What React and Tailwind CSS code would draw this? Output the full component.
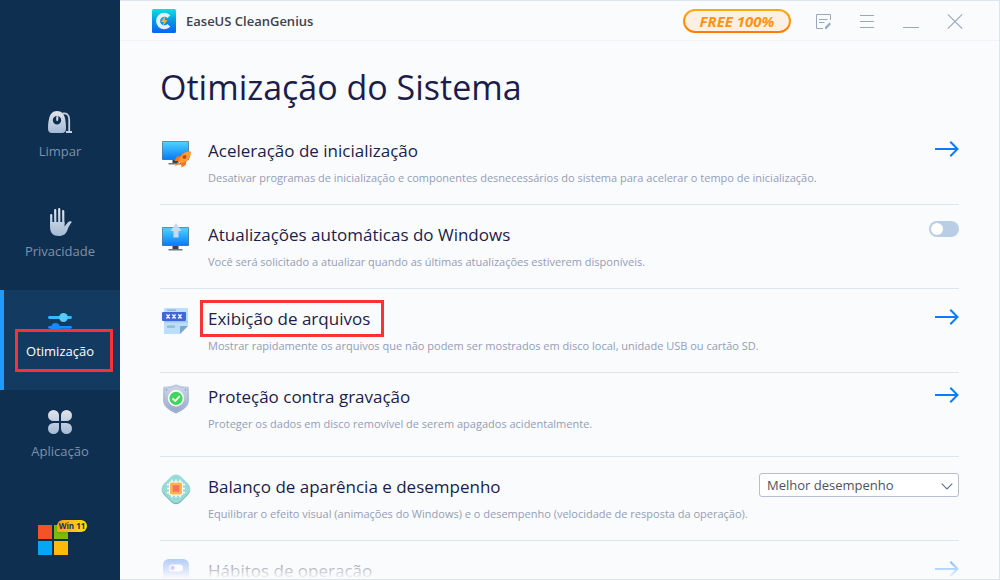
import React from "react";

function CleanIcon() {
  return (
    <svg width="24" height="24" viewBox="0 0 24 24" aria-hidden="true">
      <defs>
        <linearGradient id="navGrey" x1="0" y1="0" x2="0" y2="1">
          <stop offset="0" stopColor="#e2e5ea" />
          <stop offset="1" stopColor="#a3bad6" />
        </linearGradient>
      </defs>
      <path fillRule="evenodd" fill="url(#navGrey)" d="M9 1C13.500 1 16.500 4 17.200 9C17.700 12 18 15 18 18.500C18 21.500 16.500 23 14 23H4C1.500 23 0 21.500 0 18.500C0 15 .3 12 1 9C2 4 4.500 1 9 1ZM9 6A4.200 4.200 0 1 0 9 14.400A4.200 4.200 0 1 0 9 6Z" />
      <path d="M8.300 6.200L10.400 6.200L10.200 9.900A1 1 0 0 1 8.200 9.900Z" fill="#d3dbe6" />
      <path d="M14 3.600C18.500 2.400 21.200 5 21.200 9.500V22M18 22H24" fill="none" stroke="#c5d0df" strokeWidth="1.800" />
    </svg>
  );
}

function HandIcon() {
  return (
    <svg width="24" height="28" viewBox="0 0 24 28" aria-hidden="true">
      <defs>
        <linearGradient id="handGrey" gradientUnits="userSpaceOnUse" x1="0" y1="0" x2="0" y2="28">
          <stop offset="0" stopColor="#e2e5ea" />
          <stop offset="1" stopColor="#a3bad6" />
        </linearGradient>
      </defs>
      <g stroke="url(#handGrey)" strokeWidth="2.200" strokeLinecap="round">
        <path d="M3.200 7L3.300 18M7.200 2.200L7.300 16M11.200 1.200L11.300 16M15.200 3.200L15.300 16" />
      </g>
      <path fill="url(#handGrey)" d="M2.100 14H16.500V18.500L20 14.200C21 13.100 22.500 12.700 24 13.800C22.500 15.700 21 18 19.800 21C18.200 26 15.500 28 10.800 28C5 28 2.100 24.500 2.100 19.500Z" />
    </svg>
  );
}

function SlidersIcon() {
  return (
    <svg width="24" height="24" viewBox="0 0 24 24" aria-hidden="true">
      <path d="M1.500 7.500H22.500" stroke="#38b6ff" strokeWidth="2.800" strokeLinecap="round" />
      <ellipse cx="15.500" cy="7.500" rx="4.300" ry="4.500" fill="#5cc8ff" />
      <path d="M1.500 17.300H22.500" stroke="#168bff" strokeWidth="2.800" strokeLinecap="round" />
      <ellipse cx="7.500" cy="17.300" rx="4.400" ry="4.400" fill="#168bff" />
    </svg>
  );
}

function CloverIcon() {
  return (
    <svg width="24" height="24" viewBox="0 0 24 24" aria-hidden="true">
      <defs>
        <linearGradient id="cloverGrey" gradientUnits="userSpaceOnUse" x1="0" y1="0" x2="0" y2="24">
          <stop offset="0" stopColor="#e2e5ea" />
          <stop offset="1" stopColor="#a3bad6" />
        </linearGradient>
      </defs>
      <path fill="url(#cloverGrey)" d="M5.500 0A5.500 5.500 0 0 1 11 5.500V11H5.500A5.500 5.500 0 0 1 5.500 0ZM18.500 0A5.500 5.500 0 0 1 18.500 11H13V5.500A5.500 5.500 0 0 1 18.500 0ZM5.500 13H11V18.500A5.500 5.500 0 1 1 5.500 13ZM13 13H18.500A5.500 5.500 0 1 1 13 18.500Z" />
    </svg>
  );
}

function AppLogo() {
  return (
    <svg width="24" height="24" viewBox="0 0 24 24" aria-hidden="true">
      <defs>
        <linearGradient id="logoBg" x1="0" y1="0" x2="0" y2="1">
          <stop offset="0" stopColor="#04e3e0" />
          <stop offset=".5" stopColor="#0795e8" />
          <stop offset="1" stopColor="#0763f0" />
        </linearGradient>
      </defs>
      <rect width="24" height="24" rx="1.500" fill="url(#logoBg)" />
      <path d="M16.900 7.600A6.300 6.300 0 1 0 16.900 16.400" fill="none" stroke="#e3f1fc" strokeWidth="4" />
      <path d="M13.200 7L8.800 12.900H11.600L10.800 17.300L15.400 11.300H12.500Z" fill="#ffb52e" />
    </svg>
  );
}

function MonitorBase({ id }) {
  return (
    <>
      <defs>
        <linearGradient id={id} x1="0" y1="0" x2="0" y2="1">
          <stop offset="0" stopColor="#4fd3ff" />
          <stop offset="1" stopColor="#087cf7" />
        </linearGradient>
      </defs>
      <rect x="2" y="5" width="27" height="19" rx="1" fill="#64727e" />
      <rect x="2.700" y="5.700" width="25.600" height="17.600" fill={`url(#${id})`} />
      <path d="M12.500 24H18.500V27H12.500Z" fill="#38434e" />
      <path d="M8.500 27H22.500V28.500H8.500Z" fill="#6d7780" />
    </>
  );
}

function RocketMonitorIcon() {
  return (
    <svg width="32" height="32" viewBox="0 0 32 32" aria-hidden="true">
      <g transform="translate(0 -1)">
        <MonitorBase id="screenA" />
      </g>
      <path d="M30.500 14.500C26 14.400 22.500 16 20.500 19L16.800 19.500L14.500 24L18.500 24.100L21.200 27L21.500 30.500L25.800 28L26.300 24.500C30 21.700 31 18.500 30.500 14.500Z" fill="#f97321" />
      <path d="M30.500 14.500C25.500 14.400 21.500 16.500 18.500 23.600L21.200 26.600C27.300 24.200 31 20 30.500 14.500Z" fill="#ff9e35" />
      <circle cx="24.500" cy="20" r="2" fill="#c24c12" />
      <path d="M18 25L14.500 29.500L19.800 26.800Z" fill="#ff8a2a" />
    </svg>
  );
}

function UpdateMonitorIcon() {
  return (
    <svg width="32" height="32" viewBox="0 0 32 32" aria-hidden="true">
      <g transform="translate(0 1)">
        <MonitorBase id="screenB" />
      </g>
      <path d="M16 2L21.500 10H18.500V16.500H13.500V10H10.500Z" fill="#c7d9f4" />
    </svg>
  );
}

function FileIcon() {
  return (
    <svg width="32" height="32" viewBox="0 0 32 32" aria-hidden="true">
      <path d="M5 3H27Q28 3 28 4V21L20 29H5Q4 29 4 28V4Q4 3 5 3Z" fill="#bbdffb" />
      <path d="M28 21L20 29V22Q20 21 21 21Z" fill="#78a9cc" />
      <rect x="7" y="4.500" width="9" height="1.500" fill="#8db6d6" />
      <rect x="7" y="20.500" width="8" height="2.200" rx=".5" fill="#8fb8d9" />
      <path d="M4 16H28V17.500H4Z" fill="#9bc6ea" />
      <rect x="2" y="7" width="24" height="9" rx="1" fill="#4068d9" />
      <path d="M6.500 9.300L9.700 13.500M9.700 9.300L6.500 13.500M12.400 9.300L15.600 13.500M15.600 9.300L12.400 13.500M18.300 9.300L21.500 13.500M21.500 9.300L18.300 13.500" stroke="#fff" strokeWidth="1.300" />
    </svg>
  );
}

function ShieldIcon() {
  return (
    <svg width="32" height="32" viewBox="0 0 32 32" aria-hidden="true">
      <defs>
        <linearGradient id="shield" x1="0" y1="0" x2="0" y2="1">
          <stop offset="0" stopColor="#d4dbe9" />
          <stop offset="1" stopColor="#93a7c9" />
        </linearGradient>
      </defs>
      <path d="M16 1C20 3 24 3.700 29 3.700V17C29 23.500 23 27.500 16 30.500C9 27.500 3 23.500 3 17V3.700C8 3.700 12 3 16 1Z" fill="url(#shield)" />
      <path d="M16 2.700C20 4.300 24 5 27.700 5V17C27.700 22.700 22 26.500 16 29C10 26.500 4.300 22.700 4.300 17V5C8 5 12 4.300 16 2.700Z" fill="none" stroke="#a9b9d5" strokeWidth=".7" />
      <circle cx="6.500" cy="7" r=".8" fill="#8093b5" />
      <circle cx="25.500" cy="7" r=".8" fill="#8093b5" />
      <circle cx="16" cy="15.300" r="8.200" fill="#fff" />
      <circle cx="16" cy="15.300" r="6.600" fill="#3fd65c" />
      <path d="M12.500 15.400L15.200 18L19.800 13.200" fill="none" stroke="#fff" strokeWidth="1.800" />
    </svg>
  );
}

function ChipIcon() {
  return (
    <svg width="32" height="32" viewBox="0 0 32 32" aria-hidden="true">
      <rect x="4" y="5" width="24" height="24" rx="6.500" transform="rotate(45 16 17)" fill="#6fb9b9" />
      <rect x="4" y="3.700" width="24" height="24" rx="6.500" transform="rotate(45 16 15.700)" fill="#98dad6" />
      <rect x="9" y="8.500" width="14" height="14" rx="2" fill="#fff" />
      <path d="M12 6.500V24.500M16 6.500V24.500M20 6.500V24.500M7 11.500H25M7 15.500H25M7 19.500H25" stroke="#fff" strokeWidth="1.300" />
      <rect x="10" y="9.500" width="12" height="12" rx="1.500" fill="#ffb44f" />
      <rect x="12.700" y="12.200" width="6.600" height="6.600" fill="#ff735c" />
    </svg>
  );
}

function HabitIcon() {
  return (
    <svg width="32" height="32" viewBox="0 0 32 32" aria-hidden="true">
      <rect x="3" y="2" width="26" height="28" rx="6" fill="#7fa8f3" />
      <rect x="9" y="7.500" width="14" height="7" rx="3.500" fill="#fff" />
      <circle cx="12.500" cy="11" r="2.200" fill="#8a6df2" />
      <rect x="9" y="18" width="14" height="7" rx="3.500" fill="#c9b5ff" />
    </svg>
  );
}

function ArrowLink({ label }) {
  return (
    <button type="button" aria-label={label} className="mt-5 block cursor-pointer">
      <svg width="24" height="16" viewBox="0 0 24 16" aria-hidden="true">
        <path d="M0 8H22.500M15.300 .8L22.500 8L15.300 15.200" fill="none" stroke="#0a7cff" strokeWidth="2" />
      </svg>
    </button>
  );
}

function UpdateSwitch() {
  return (
    <input
      type="checkbox"
      role="switch"
      aria-label="Atualizações automáticas do Windows"
      className="mt-4 block h-4 w-[30px] cursor-pointer appearance-none rounded-full bg-[#b9cde4] before:m-0.5 before:block before:size-3 before:rounded-full before:bg-white checked:bg-[#0a7cff] checked:before:ml-4"
    />
  );
}

function PerformanceSelect() {
  return (
    <div className="relative mt-4 w-[200px]">
      <select
        aria-label="Balanço de aparência e desempenho"
        className="block h-6 w-full appearance-none rounded-[3px] border border-[#b5bfd3] bg-white pr-6 pl-[7px] text-[13px] leading-5 text-[#4d5260]"
      >
        <option>Melhor desempenho</option>
        <option>Melhor aparência</option>
      </select>
      <svg className="pointer-events-none absolute top-[10px] right-[6px]" width="12" height="7" viewBox="0 0 12 7" aria-hidden="true">
        <path d="M.7 .7L6 6L11.300 .7" fill="none" stroke="#5d7391" strokeWidth="1.100" />
      </svg>
    </div>
  );
}

const navItems = [
  { label: "Limpar", icon: CleanIcon },
  { label: "Privacidade", icon: HandIcon },
  { label: "Otimização", icon: SlidersIcon, active: true },
  { label: "Aplicação", icon: CloverIcon },
];

const rows = [
  {
    title: "Aceleração de inicialização",
    text: "Desativar programas de inicialização e componentes desnecessários do sistema para acelerar o tempo de inicialização.",
    icon: RocketMonitorIcon,
  },
  {
    title: "Atualizações automáticas do Windows",
    text: "Você será solicitado a atualizar quando as últimas atualizações estiverem disponíveis.",
    icon: UpdateMonitorIcon,
    control: UpdateSwitch,
  },
  {
    title: "Exibição de arquivos",
    text: "Mostrar rapidamente os arquivos que não podem ser mostrados em disco local, unidade USB ou cartão SD.",
    icon: FileIcon,
    marked: true,
  },
  {
    title: "Proteção contra gravação",
    text: "Proteger os dados em disco removível de serem apagados acidentalmente.",
    icon: ShieldIcon,
    raised: true,
  },
  {
    title: "Balanço de aparência e desempenho",
    text: "Equilibrar o efeito visual (animações do Windows) e o desempenho (velocidade de resposta da operação).",
    icon: ChipIcon,
    control: PerformanceSelect,
  },
  { title: "Hábitos de operação", icon: HabitIcon },
];

function Sidebar() {
  return (
    <aside className="flex w-[120px] shrink-0 flex-col bg-[#0e2f50] pt-[90px]">
      <nav>
        {navItems.map(({ label, icon: Icon, active }) => (
          <a
            key={label}
            href="#"
            aria-current={active ? "page" : undefined}
            className={`relative flex h-[100px] flex-col items-center pt-5 text-[13px] ${
              active ? "bg-[#133b62] text-white" : "text-[#7d92aa]"
            }`}
          >
            {active && <span className="absolute inset-y-0 left-0 w-1 bg-[#1f9bff]" />}
            <span className="flex h-6 items-center">
              <Icon />
            </span>
            <span className="mt-[7px] leading-5">{label}</span>
            {active && <span className="absolute top-[39px] right-[7px] bottom-[18px] left-[15px] border-3 border-[#fb3235]" />}
          </a>
        ))}
      </nav>
      <div className="relative mt-auto ml-[38px] grid w-[30px] grid-cols-2 gap-0.5 pb-[25px]">
        <span className="h-3.5 bg-[#f65225]" />
        <span className="h-3.5 bg-[#7fba0a]" />
        <span className="h-3.5 bg-[#05a6f3]" />
        <span className="h-3.5 bg-[#ffba0d]" />
        <span className="absolute -top-[5px] left-[19px] flex h-3 w-[30px] items-center justify-center rounded-full rounded-bl-none bg-linear-to-r from-[#ffa11c] to-[#ffe000] text-[8px] leading-3 font-bold whitespace-nowrap text-[#153250] shadow">
          Win 11
        </span>
      </div>
    </aside>
  );
}

function TitleBar() {
  return (
    <header className="flex h-10 shrink-0 items-center border-b border-[#eff2f7] pr-9 pl-8">
      <AppLogo />
      <span className="ml-2.5 text-[13px] leading-6 font-semibold text-[#3d424c]">EaseUS CleanGenius</span>
      <button
        type="button"
        className="ml-auto h-6 w-[108px] cursor-pointer rounded-full bg-linear-to-b from-[#ffaa12] to-[#ff7c05] p-0.5"
      >
        <span className="block rounded-full bg-[#fdf0e2] text-[15px] leading-5 font-bold text-[#ff930f] italic">FREE 100%</span>
      </button>
      <div className="ml-6 flex items-center gap-7 text-[#99a9bd]">
        <button type="button" aria-label="Comentários" className="cursor-pointer">
          <svg className="block" width="17" height="16" viewBox="0 0 17 16" fill="none" stroke="currentColor" aria-hidden="true">
            <path d="M8 15.500H1.500V1.500H15.500V7M4 6.500H12.500M4 9.500H9.500" />
            <path d="M10 16V14L14.500 9.500L16 11L11.500 16Z" fill="currentColor" stroke="none" />
          </svg>
        </button>
        <button type="button" aria-label="Menu" className="cursor-pointer">
          <svg className="block" width="15" height="16" viewBox="0 0 15 16" stroke="currentColor" aria-hidden="true">
            <path d="M0 2.500H14M0 8.500H14M0 14.500H14" />
          </svg>
        </button>
        <button type="button" aria-label="Minimizar" className="cursor-pointer">
          <svg className="block" width="16" height="16" viewBox="0 0 16 16" stroke="currentColor" aria-hidden="true">
            <path d="M0 14.500H16" />
          </svg>
        </button>
        <button type="button" aria-label="Fechar" className="cursor-pointer">
          <svg className="block" width="16" height="16" viewBox="0 0 16 16" stroke="currentColor" aria-hidden="true">
            <path d="M.8 1.300L15.200 15.700M15.200 1.300L.8 15.700" strokeWidth="1.100" />
          </svg>
        </button>
      </div>
    </header>
  );
}

function SettingRow({ title, text, icon: Icon, control: Control, marked, raised }) {
  return (
    <li className={`flex h-[84px] items-start border-b border-[#dce4ee] ${raised ? "" : "pt-1.5"}`}>
      <span className="mt-2.5 shrink-0">
        <Icon />
      </span>
      <div className="ml-4 min-w-0 flex-1 pt-3">
        <h2 className="relative w-fit text-[17px] leading-6 text-[#1c1d4a]">
          {title}
          {marked && <span className="absolute -top-[7px] -right-[14px] -bottom-[6px] -left-2 border-3 border-[#fb3235]" />}
        </h2>
        {text && <p className="mt-[7px] text-[11px] leading-4 whitespace-nowrap text-[#949db6]">{text}</p>}
      </div>
      <div className="-mt-1.5">{Control ? <Control /> : <ArrowLink label={title} />}</div>
    </li>
  );
}

export default function App() {
  return (
    <div className="flex h-screen overflow-hidden bg-[#fafbfd] font-['Open_Sans','Noto_Sans',sans-serif]">
      <Sidebar />
      <div className="relative flex min-w-0 flex-1 flex-col overflow-hidden border-t border-r border-b border-[#dbe4ef]">
        <TitleBar />
        <main className="min-h-0 flex-1 overflow-hidden px-10 pt-5">
          <h1 className="text-[34px] leading-[52px] text-[#1c1d4a]">Otimização do Sistema</h1>
          <ul className="mt-2">
            {rows.map((row) => (
              <SettingRow key={row.title} {...row} />
            ))}
          </ul>
        </main>
        <div className="pointer-events-none absolute inset-x-0 bottom-0 h-7 bg-linear-to-b from-[#fafbfd]/20 to-[#fafbfd]" />
      </div>
    </div>
  );
}
